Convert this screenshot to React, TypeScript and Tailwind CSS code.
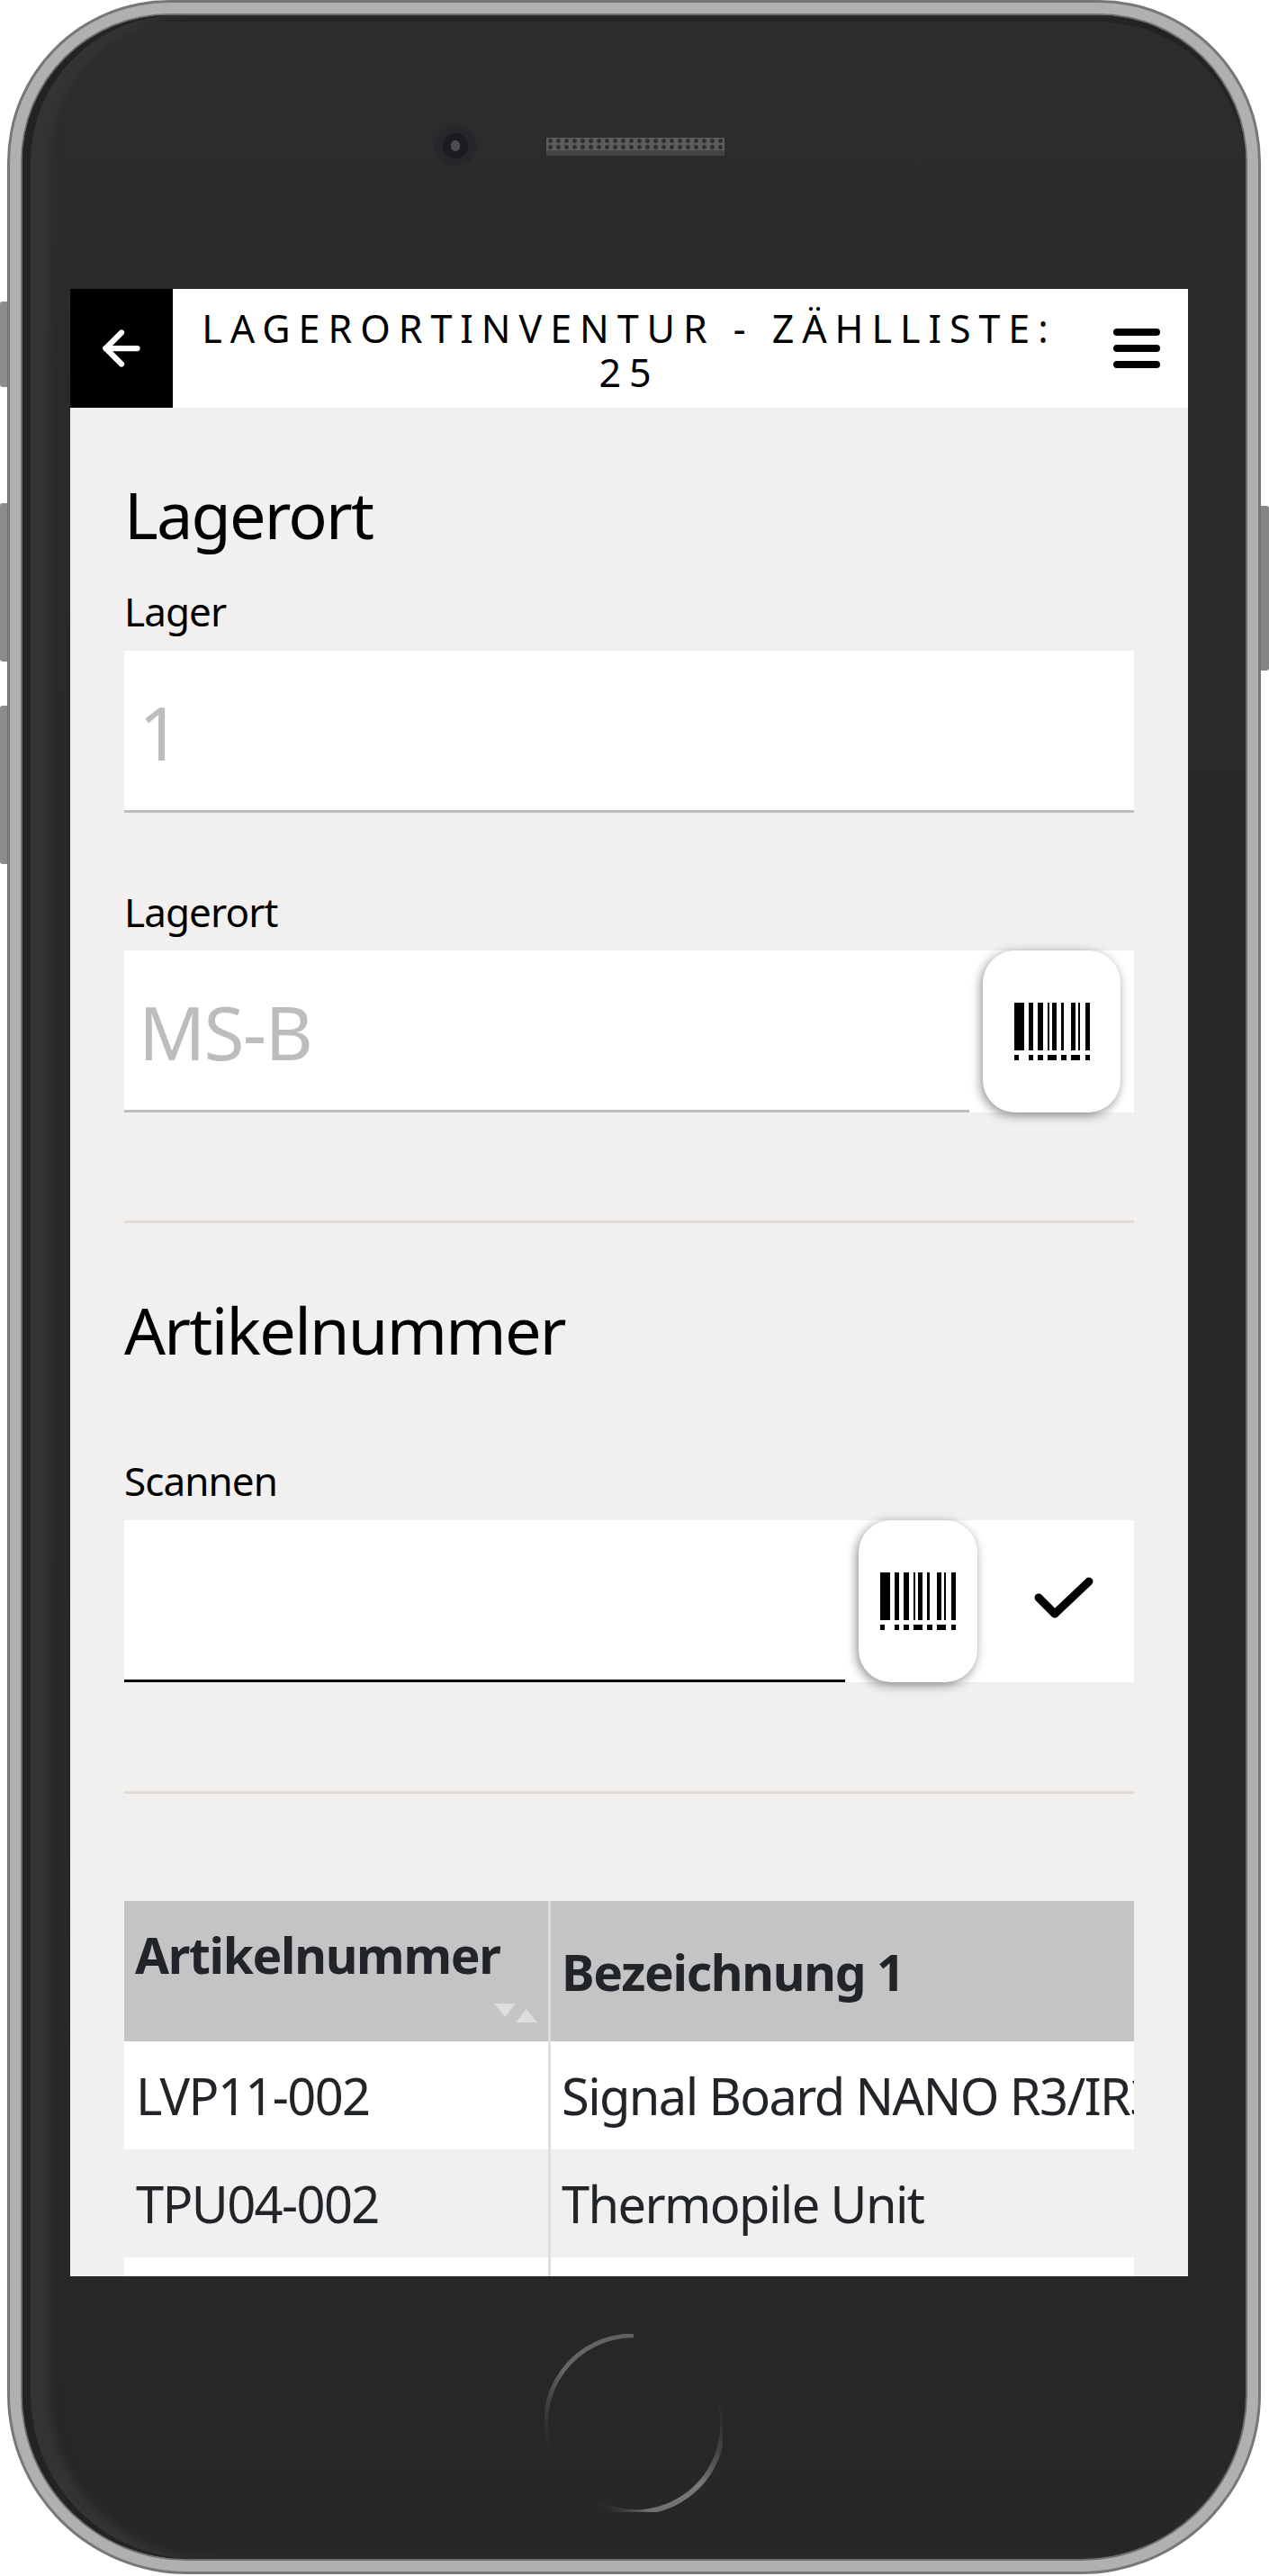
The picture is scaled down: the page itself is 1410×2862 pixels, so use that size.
import { ArrowLeft } from 'lucide-react'

const font = { fontFamily: '"Noto Sans", sans-serif' }

const bars = [
  [0, 2], [3, 1], [5, 1], [7, 0.5], [8, 1], [10, 0.5], [12, 1], [13.5, 0.5], [15, 1],
]
const dots = [
  [0, 1], [3, 1], [5, 1], [7, 2], [10, 1], [12, 2], [15, 1],
]

function Barcode() {
  return (
    <svg width="84" height="64" viewBox="0 0 16 12.2" shapeRendering="crispEdges">
      {bars.map(([x, w]) => (
        <rect key={x} x={x} y="0" width={w} height="10.1" fill="#000" />
      ))}
      {dots.map(([x, w]) => (
        <rect key={x} x={x} y="11.1" width={w} height="1.1" fill="#000" />
      ))}
    </svg>
  )
}

function ScanButton({ className }: { className: string }) {
  return (
    <button className={`${className} h-[180px] shrink-0 rounded-[36px] bg-white flex items-center justify-center shadow-[-2px_3px_12px_rgba(0,0,0,0.45)]`}>
      <Barcode />
    </button>
  )
}

const rows = [
  ['LVP11-002', 'Signal Board NANO R3/IR3'],
  ['TPU04-002', 'Thermopile Unit'],
  ['', ''],
]

export default function App() {
  return (
    <div className="relative w-[1410px] h-[2862px] bg-white overflow-hidden" style={font}>
      {/* side buttons */}
      <div className="absolute left-0 top-[335px] w-[10px] h-[95px] bg-[#8c8c8c] rounded-l-[3px]" />
      <div className="absolute left-0 top-[559px] w-[10px] h-[176px] bg-[#8c8c8c] rounded-l-[3px]" />
      <div className="absolute left-0 top-[784px] w-[10px] h-[176px] bg-[#8c8c8c] rounded-l-[3px]" />
      <div className="absolute right-0 top-[562px] w-[11px] h-[183px] bg-[#858585] rounded-r-[3px]" />

      {/* phone body */}
      <div className="absolute left-[8px] top-0 w-[1393px] h-[2860px] rounded-t-[180px] rounded-b-[200px] bg-[#777777] p-[3px]">
        <div className="w-full h-full rounded-t-[177px] rounded-b-[197px] bg-[#b0b0b0] p-[12px]">
          <div className="w-full h-full rounded-t-[165px] rounded-b-[185px] bg-[#6e6e6e] p-[2px]">
            <div className="relative w-full h-full rounded-t-[163px] rounded-b-[183px] bg-[linear-gradient(180deg,#2d2d2d_0%,#2a2a2a_15%,#272727_100%)] shadow-[inset_9px_0_0_#232323,inset_30px_0_8px_#343434,inset_0_7px_0_#232323] pt-[304px] pl-[53px]">
              {/* camera + speaker */}
              <div className="absolute left-[458px] top-[122px] w-[46px] h-[46px] rounded-full bg-[#26262b] flex items-center justify-center">
                <div className="w-[28px] h-[28px] rounded-full bg-[#1b1b20] flex items-center justify-center">
                  <div className="w-[10px] h-[12px] rounded-full bg-[#4c4c52]" />
                </div>
              </div>
              <div className="absolute left-[582px] top-[136px] w-[198px] h-[20px] bg-[#444444]">
                <div className="h-[14px] bg-[radial-gradient(circle,#2e2e2e_35%,#5c5c5c_50%)] bg-[length:9px_7px]" />
              </div>
              {/* home button */}
              <svg className="absolute left-[580px] top-[2576px]" width="198" height="198" viewBox="0 0 204 204" fill="none">
                <defs>
                  <linearGradient id="homeA" gradientUnits="userSpaceOnUse" x1="102" y1="2" x2="4" y2="132">
                    <stop offset="0" stopColor="#777777" stopOpacity="0.7" />
                    <stop offset="0.5" stopColor="#666666" />
                    <stop offset="1" stopColor="#4a4a4a" stopOpacity="0" />
                  </linearGradient>
                  <linearGradient id="homeB" gradientUnits="userSpaceOnUse" x1="198" y1="70" x2="60" y2="194">
                    <stop offset="0" stopColor="#4a4a4a" stopOpacity="0" />
                    <stop offset="0.45" stopColor="#7a7a7a" />
                    <stop offset="0.8" stopColor="#6e6e6e" />
                    <stop offset="1" stopColor="#444444" stopOpacity="0" />
                  </linearGradient>
                </defs>
                <path d="M6 132 A100 100 0 0 1 102 2" stroke="url(#homeA)" strokeWidth="5" />
                <path d="M198 70 A100 100 0 0 1 60 194" stroke="url(#homeB)" strokeWidth="6" />
              </svg>

              {/* screen */}
              <div className="w-[1242px] h-[2208px] bg-[#f1f0ee] overflow-hidden">
                <header className="flex h-[132px] bg-white">
                  <button className="w-[114px] shrink-0 bg-black flex items-center justify-center">
                    <ArrowLeft size={60} color="#fff" strokeWidth={2.5} />
                  </button>
                  <div className="flex-1 text-center text-[43px] leading-[49px] tracking-[8.95px] pt-[19px] text-black">
                    LAGERORTINVENTUR - ZÄHLLISTE: 25
                  </div>
                  <div className="w-[114px] shrink-0 flex flex-col items-center justify-center gap-[10px]">
                    <div className="w-[52px] h-[8px] rounded-full bg-black" />
                    <div className="w-[52px] h-[8px] rounded-full bg-black" />
                    <div className="w-[52px] h-[8px] rounded-full bg-black" />
                  </div>
                </header>

                <main className="px-[60px] pt-[77px]">
                  <h2 className="text-[72px] leading-[82px] text-black tracking-[-1.8px]">Lagerort</h2>
                  <div className="mt-[40px] text-[44px] leading-[54px] h-[54px] text-black tracking-[-0.9px]">Lager</div>
                  <div className="mt-[17px] h-[180px] bg-white border-b-[3px] border-[#bdbdbd] flex items-center pl-[16px] pt-[4px] text-[82px] text-[#bdbdbd] tracking-[-1.8px]">1</div>

                  <div className="mt-[83px] text-[44px] leading-[54px] h-[54px] text-black tracking-[-0.9px]">Lagerort</div>
                  <div className="mt-[16px] h-[180px] bg-white flex">
                    <div className="w-[939px] border-b-[3px] border-[#bdbdbd] flex items-center pl-[16px] pt-[4px] text-[82px] text-[#bdbdbd] tracking-[-1.8px]">MS-B</div>
                    <ScanButton className="ml-[15px] w-[153px]" />
                  </div>

                  <div className="mt-[120px] h-[3px] bg-[#e0dbd5]" />
                  <h2 className="mt-[77px] text-[72px] leading-[82px] text-black tracking-[-1.7px]">Artikelnummer</h2>
                  <div className="mt-[100px] text-[44px] leading-[54px] h-[54px] text-black tracking-[-0.9px]">Scannen</div>
                  <div className="mt-[17px] h-[180px] bg-white flex">
                    <div className="w-[801px] border-b-[3px] border-black" />
                    <ScanButton className="ml-[15px] w-[132px]" />
                    <div className="flex-1 flex items-center justify-center">
                      <svg className="ml-[18px] mb-[6px]" width="68" height="50" viewBox="0 0 68 50" fill="none">
                        <path d="M6 24 L24 42 L62 6" stroke="#000" strokeWidth="9" strokeLinecap="round" strokeLinejoin="round" />
                      </svg>
                    </div>
                  </div>

                  <div className="mt-[121px] h-[3px] bg-[#e0dbd5]" />

                  <div className="mt-[119px] grid grid-cols-[474px_648px] overflow-hidden text-[#212529] text-[56px] tracking-[-1.6px]">
                    <div className="relative h-[156px] bg-[#c4c4c4] border-r-[3px] border-[#dedede] pl-[12px] pt-[24px] font-bold text-[55px] leading-[72px] tracking-[-1.3px]">
                      Artikelnummer
                      <div className="absolute left-[411px] top-[114px] w-0 h-0 border-x-[12px] border-x-transparent border-t-[15px] border-t-[#dedede]" />
                      <div className="absolute left-[435px] top-[120px] w-0 h-0 border-x-[12px] border-x-transparent border-b-[15px] border-b-[#dedede]" />
                    </div>
                    <div className="h-[156px] bg-[#c4c4c4] pl-[12px] pt-[43px] font-bold text-[55px] leading-[72px] tracking-[-1.3px]">Bezeichnung 1</div>
                    {rows.map(([a, b], i) => (
                      <div key={i} className="contents">
                        <div className={`h-[120px] ${i % 2 ? 'bg-[#f0f0f0]' : 'bg-white'} border-r-[3px] border-[#dedede] pl-[13px] flex items-center`}>{a}</div>
                        <div className={`h-[120px] ${i % 2 ? 'bg-[#f0f0f0]' : 'bg-white'} pl-[12px] flex items-center whitespace-nowrap overflow-hidden`}>{b}</div>
                      </div>
                    ))}
                  </div>
                </main>
              </div>
            </div>
          </div>
        </div>
      </div>
    </div>
  )
}
